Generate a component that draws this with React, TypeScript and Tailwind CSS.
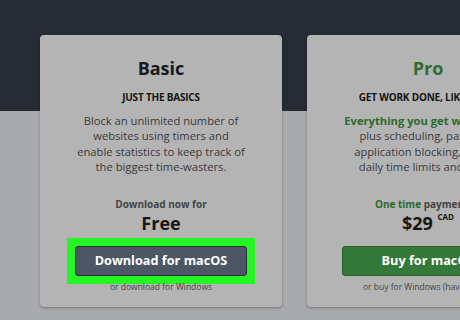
import React from "react";

function Card({
  title,
  titleClass,
  subtitle,
  desc,
  priceLabel,
  price,
  highlight,
  buttonText,
  buttonClass,
  footer,
}: {
  title: string;
  titleClass: string;
  subtitle: string;
  desc: React.ReactNode;
  priceLabel: React.ReactNode;
  price: React.ReactNode;
  highlight: boolean;
  buttonText: string;
  buttonClass: string;
  footer: string;
}) {
  return (
    <div className="w-[242px] h-[272px] shrink-0 rounded-[4px] bg-[#b4b4b4] shadow-[0_1px_3px_rgba(0,0,0,0.3)] flex flex-col items-center text-center pt-[21px]">
      <div className={`text-[18px] leading-[24px] font-bold ${titleClass}`}>{title}</div>
      <div className="mt-[9px] text-[10px] leading-[16px] font-bold text-[#141414] whitespace-nowrap tracking-[-0.2px]">
        {subtitle}
      </div>
      <div className="mt-[8px] text-[11.2px] leading-[15.4px] text-[#3a3a3a] whitespace-nowrap">{desc}</div>
      <div className="mt-[21px] text-[10px] leading-[16px] font-bold text-[#444] whitespace-nowrap">{priceLabel}</div>
      <div className="text-[18px] leading-[22px] font-bold text-[#161616] whitespace-nowrap">{price}</div>
      <div className={`mt-[4px] px-[8px] py-[8px] ${highlight ? "bg-[#25f425]" : ""}`}>
        <div
          className={`w-[172px] h-[30px] rounded-[3px] flex items-center justify-center text-[12.7px] font-bold text-white whitespace-nowrap ${buttonClass}`}
        >
          {buttonText}
        </div>
      </div>
      <div className="-mt-[4px] text-[8.5px] leading-[14px] text-[#444] whitespace-nowrap">{footer}</div>
    </div>
  );
}

export default function App() {
  return (
    <div
      className="w-[460px] h-[320px] overflow-hidden bg-[linear-gradient(to_bottom,#272c34_0px,#272c34_111px,#a9aaad_111px)] flex gap-[25px] pl-[40px] pt-[35px]"
      style={{ fontFamily: '"Open Sans", "Noto Sans", sans-serif' }}
    >
      <Card
        title="Basic"
        titleClass="text-[#161a1f]"
        subtitle="JUST THE BASICS"
        desc={
          <>
            Block an unlimited number of
            <br />
            websites using timers and
            <br />
            enable statistics to keep track of
            <br />
            the biggest time-wasters.
          </>
        }
        priceLabel="Download now for"
        price="Free"
        highlight={true}
        buttonText="Download for macOS"
        buttonClass="bg-[#4d5665] border border-[#2b3038]"
        footer="or download for Windows"
      />
      <Card
        title="Pro"
        titleClass="text-[#2f6e31]"
        subtitle="GET WORK DONE, LIKE A PRO"
        desc={
          <>
            <span className="font-bold text-[#2b6a2c]">Everything you get with Basic,</span>
            <br />
            plus scheduling, password
            <br />
            application blocking, breaks,
            <br />
            daily time limits and more.
          </>
        }
        priceLabel={
          <>
            <span className="text-[#2b6a2c]">One time</span> payment of
          </>
        }
        price={
          <>
            $29 <sup className="text-[8px] font-bold align-[6px]">CAD</sup>
          </>
        }
        highlight={false}
        buttonText="Buy for macOS"
        buttonClass="bg-[#35793a] border border-[#2a5e2d] text-[#e8f0e8]"
        footer="or buy for Windows (have a key?)"
      />
    </div>
  );
}
